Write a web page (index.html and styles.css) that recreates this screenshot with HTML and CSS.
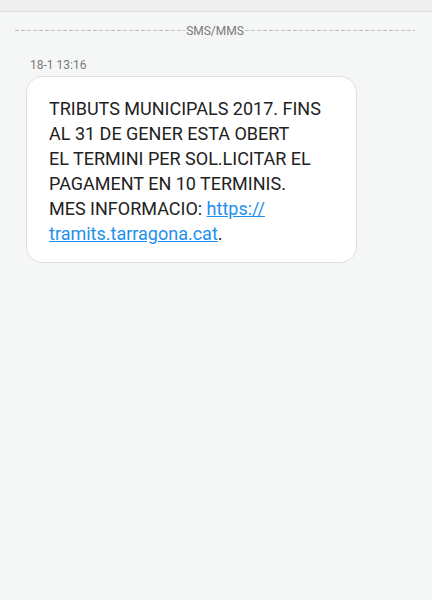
FILE: index.html
```html
<!DOCTYPE html>
<html lang="ca">
<head>
    <meta charset="UTF-8">
    <meta name="viewport" content="width=device-width, initial-scale=1.0">
    <title>Missatges</title>
    <link rel="stylesheet" href="styles.css">
</head>
<body>
    <div class="topbar"></div>
    <div class="thread">
        <div class="divider">
            <span class="line"></span>
            <span class="divider-label">SMS/MMS</span>
            <span class="line"></span>
        </div>
        <div class="time">18-1 13:16</div>
        <div class="bubble">
            TRIBUTS MUNICIPALS 2017. FINS<br>
            AL 31 DE GENER ESTA OBERT<br>
            EL TERMINI PER SOL.LICITAR EL<br>
            PAGAMENT EN 10 TERMINIS.<br>
            MES INFORMACIO: <a href="#">https://<br>tramits.tarragona.cat</a>.
        </div>
    </div>
</body>
</html>
```

FILE: styles.css
```css
/* pantalla de missatges */
html, body {
    margin: 0;
    padding: 0;
}
body {
    width: 432px;
    height: 600px;
    background-color: #f5f6f6;
    font-family: Roboto, "Noto Sans", sans-serif;
    color: #222222;
}
.topbar {
    height: 11px;
    background-color: #efefef;
    border-bottom: 1px solid #e0e0e0;
}
.thread {
    padding: 11px 17px 0 15px;
}
.divider {
    display: flex;
    align-items: center;
    height: 15px;
}
.line {
    flex: 1;
    height: 1px;
    background-image: repeating-linear-gradient(90deg, #bdbdbd 0 4px, transparent 4px 6px);
}
.divider-label {
    font-size: 12px;
    color: #7a7a7a;
    padding: 0 1px;
}
.time {
    margin: 20px 0 0 15px;
    font-size: 12px;
    line-height: 14px;
    color: #7a7a7a;
}
.bubble {
    box-sizing: border-box;
    width: 331px;
    margin: 4px 0 0 11px;
    padding: 19px 22px 16px 22px;
    background-color: #ffffff;
    border: 1px solid #dedede;
    border-radius: 17px;
    font-size: 18px;
    line-height: 25px;
}
.bubble a {
    color: #1e90f0;
    text-decoration: underline;
}
```
